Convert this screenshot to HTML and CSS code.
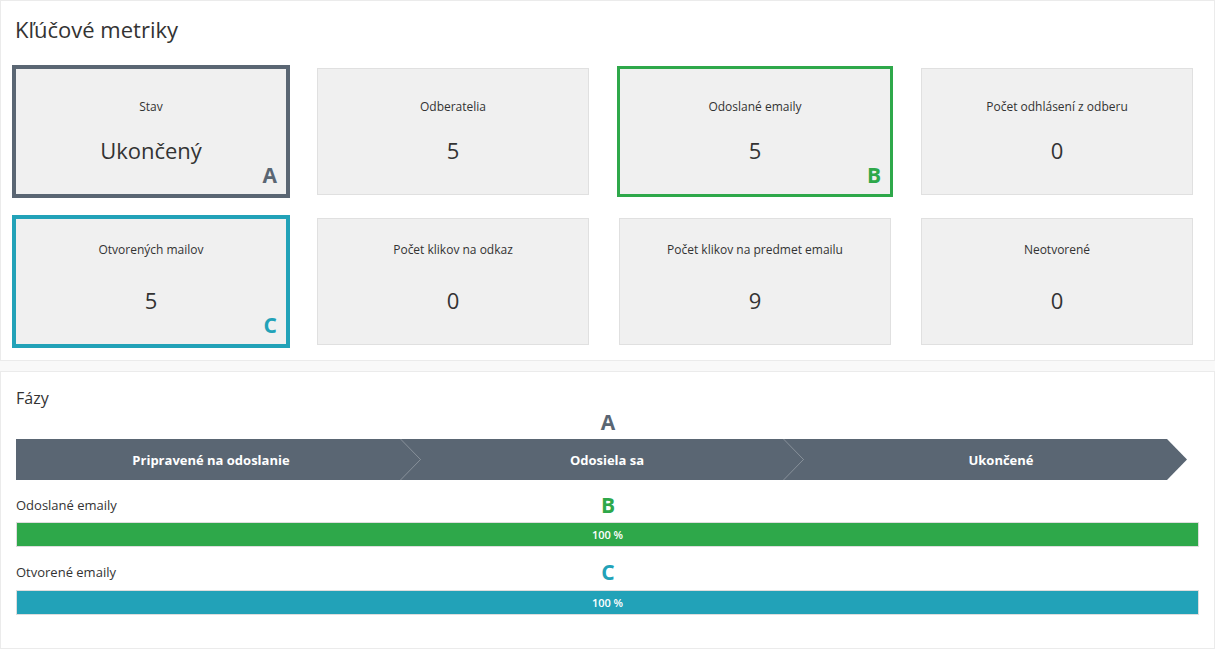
FILE: index.html
```html
<!DOCTYPE html>
<html lang="sk">
<head>
    <meta charset="UTF-8">
    <meta name="viewport" content="width=device-width, initial-scale=1.0">
    <title>Kľúčové metriky</title>
    <link rel="stylesheet" href="styles.css">
</head>
<body>

<div class="panel metrics">
    <h2 class="panel-title">Kľúčové metriky</h2>
    <div class="card-grid">
        <div class="card card-a">
            <div class="card-label">Stav</div>
            <div class="card-value">Ukončený</div>
            <span class="card-mark">A</span>
        </div>
        <div class="card">
            <div class="card-label">Odberatelia</div>
            <div class="card-value">5</div>
        </div>
        <div class="card card-b">
            <div class="card-label">Odoslané emaily</div>
            <div class="card-value">5</div>
            <span class="card-mark">B</span>
        </div>
        <div class="card">
            <div class="card-label">Počet odhlásení z odberu</div>
            <div class="card-value">0</div>
        </div>
        <div class="card card-low card-c">
            <div class="card-label">Otvorených mailov</div>
            <div class="card-value">5</div>
            <span class="card-mark">C</span>
        </div>
        <div class="card card-low">
            <div class="card-label">Počet klikov na odkaz</div>
            <div class="card-value">0</div>
        </div>
        <div class="card card-low">
            <div class="card-label">Počet klikov na predmet emailu</div>
            <div class="card-value">9</div>
        </div>
        <div class="card card-low">
            <div class="card-label">Neotvorené</div>
            <div class="card-value">0</div>
        </div>
    </div>
</div>

<div class="panel phases-panel">
    <h3 class="panel-subtitle">Fázy</h3>

    <div class="mark-row">
        <span></span>
        <span class="mark mark-a">A</span>
        <span></span>
    </div>

    <div class="phases">
        <div class="phase phase-first">Pripravené na odoslanie</div>
        <div class="phase phase-mid">
            <svg class="phase-sep" width="21" height="41" viewBox="0 0 21 41"><polyline points="0.5,0 20.5,20.5 0.5,41" /></svg>
            Odosiela sa
        </div>
        <div class="phase phase-last">
            <svg class="phase-sep" width="21" height="41" viewBox="0 0 21 41"><polyline points="0.5,0 20.5,20.5 0.5,41" /></svg>
            Ukončené
        </div>
    </div>

    <div class="mark-row progress-head">
        <span class="progress-label">Odoslané emaily</span>
        <span class="mark mark-b">B</span>
        <span></span>
    </div>
    <div class="progress">
        <div class="progress-bar bar-green" style="width: 100%">100 %</div>
    </div>

    <div class="mark-row progress-head">
        <span class="progress-label">Otvorené emaily</span>
        <span class="mark mark-c">C</span>
        <span></span>
    </div>
    <div class="progress">
        <div class="progress-bar bar-teal" style="width: 100%">100 %</div>
    </div>
</div>

</body>
</html>
```

FILE: styles.css
```css
:root {
    --slate: #5a6673;
    --green: #2ea84a;
    --teal: #22a2b8;
    --text: #333333;
    --card-bg: #f0f0f0;
    --card-border: #e0e0e0;
    --panel-border: #ebebeb;
}

* {
    box-sizing: border-box;
    margin: 0;
    padding: 0;
}

body {
    font-family: "Open Sans", "Noto Sans", Arial, sans-serif;
    background-color: #f9f9f9;
    color: var(--text);
    width: 1215px;
}

.panel {
    background-color: #ffffff;
    border: 1px solid var(--panel-border);
}

/* metriky */

.metrics {
    height: 361px;
    padding: 12px 14px 0 14px;
}

.panel-title {
    font-size: 22px;
    font-weight: 400;
    line-height: 32px;
    margin-bottom: 23px;
}

.card-grid {
    display: grid;
    grid-template-columns: repeat(4, 272px);
    grid-auto-rows: 127px;
    column-gap: 30px;
    row-gap: 23px;
}

.card {
    position: relative;
    background-color: var(--card-bg);
    border: 1px solid var(--card-border);
    display: flex;
    flex-direction: column;
    align-items: center;
    padding-top: 30px;
}

.card-label {
    font-size: 12px;
    line-height: 16px;
}

.card-value {
    font-size: 22px;
    line-height: 30px;
    margin-top: 20px;
}

.card-low {
    padding-top: 23px;
}

.card-low .card-value {
    margin-top: 27px;
}

.card-a {
    border-color: var(--slate);
    box-shadow: 0 0 0 3px var(--slate);
}

.card-b {
    border-color: var(--green);
    box-shadow: 0 0 0 2px var(--green);
}

.card-c {
    border-color: var(--teal);
    box-shadow: 0 0 0 3px var(--teal);
}

.card-mark {
    position: absolute;
    right: 9px;
    bottom: 8px;
    font-size: 21px;
    font-weight: 700;
    line-height: 22px;
}

.card-a .card-mark { color: var(--slate); }
.card-b .card-mark { color: var(--green); }
.card-c .card-mark { color: var(--teal); }

/* fazy */

.phases-panel {
    margin-top: 10px;
    height: 278px;
    padding: 15px 14px 0 15px;
}

.panel-subtitle {
    font-size: 16px;
    font-weight: 400;
    line-height: 22px;
}

.mark-row {
    display: grid;
    grid-template-columns: 1fr auto 1fr;
    align-items: center;
    height: 30px;
}

.mark {
    font-size: 21px;
    font-weight: 700;
    line-height: 26px;
    padding-bottom: 4px;
}

.mark-a { color: var(--slate); }
.mark-b { color: var(--green); }
.mark-c { color: var(--teal); }

.phases {
    display: flex;
    width: 1171px;
    height: 41px;
    background-color: var(--slate);
    clip-path: polygon(0 0, calc(100% - 20px) 0, 100% 50%, calc(100% - 20px) 100%, 0 100%);
}

.phase {
    position: relative;
    flex: none;
    display: flex;
    align-items: center;
    justify-content: center;
    color: #ffffff;
    font-size: 13px;
    font-weight: 700;
}

.phase-first {
    width: 390px;
}

.phase-mid {
    width: 383px;
    padding-left: 19px;
}

.phase-last {
    width: 398px;
    padding-left: 26px;
}

.phase-sep {
    position: absolute;
    left: -6px;
    top: 0;
}

.phase-sep polyline {
    fill: none;
    stroke: rgba(255, 255, 255, 0.28);
    stroke-width: 1;
}

.progress-head {
    height: 42px;
    padding-top: 14px;
    align-items: start;
}

.progress-label {
    font-size: 13px;
    line-height: 22px;
}

.progress-head .mark {
    line-height: 22px;
    padding-bottom: 0;
}

.progress {
    width: 1183px;
    height: 25px;
    border: 1px solid #dddddd;
    background-color: #f5f5f5;
}

.progress-bar {
    height: 100%;
    color: #ffffff;
    font-size: 11px;
    font-weight: 600;
    line-height: 23px;
    text-align: center;
}

.bar-green { background-color: var(--green); }
.bar-teal { background-color: var(--teal); }

.progress + .progress-head {
    height: 43px;
}
```
